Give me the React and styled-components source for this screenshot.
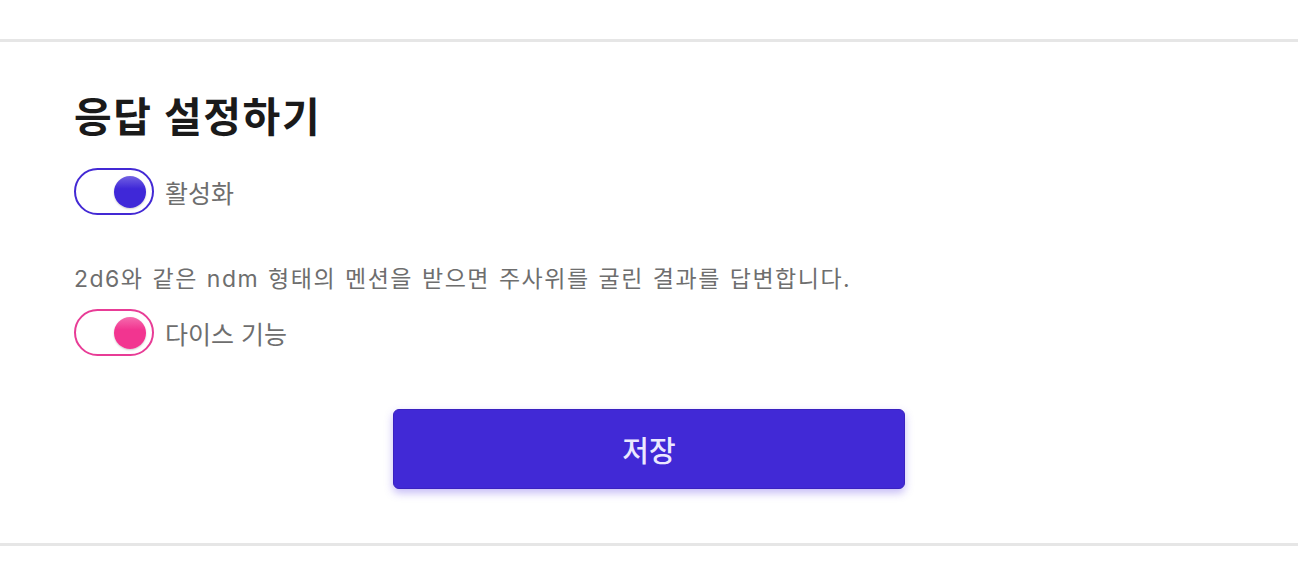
import styled, { createGlobalStyle } from "styled-components";

const Global = createGlobalStyle`
  body {
    margin: 0;
    background: #fff;
    font-family: Inter, "Noto Sans CJK KR", sans-serif;
  }
`;

export default function App() {
  return (<>
    <Global />
    <Page>
      <Card>
        <Title>응답 설정하기</Title>
        <Row $top={27}>
          <Toggle color="#4329d4" knob="#3f28d8" />
          <Label>활성화</Label>
        </Row>
        <Desc>2d6와 같은 ndm 형태의 멘션을 받으면 주사위를 굴린 결과를 답변합니다.</Desc>
        <Row $top={15}>
          <Toggle color="#e83c96" knob="#f23590" />
          <Label>다이스 기능</Label>
        </Row>
        <Actions>
          <SaveButton>저장</SaveButton>
        </Actions>
      </Card>
    </Page>
  </>);
}

function Toggle({ color, knob }) {
  return (
    <Track $color={color}>
      <Knob $color={knob} />
    </Track>
  );
}

const Page = styled.div`
  padding-top: 39px;
`;

const Card = styled.div`
  border-top: 3px solid #e6e6e6;
  border-bottom: 3px solid #e6e6e6;
  padding: 51px 74px 54px;
  display: flex;
  flex-direction: column;
`;

const Title = styled.h1`
  margin: 0;
  font-size: 41px;
  font-weight: 700;
  letter-spacing: 1.6px;
  color: #1a1a1a;
  line-height: 48px;
`;

const Row = styled.div`
  display: flex;
  align-items: center;
  gap: 11px;
  margin-top: ${p => p.$top}px;
`;

const Track = styled.div`
  box-sizing: border-box;
  width: 80px;
  height: 47px;
  border: 2px solid ${p => p.$color};
  border-radius: 24px;
  display: flex;
  align-items: center;
  justify-content: flex-end;
  padding-right: 6px;
  background: #fff;
`;

const Knob = styled.div`
  width: 32px;
  height: 32px;
  border-radius: 50%;
  background: linear-gradient(180deg, ${p => p.$color}bb 0%, ${p => p.$color} 40%);
  box-shadow: 0 1px 2px rgba(0, 0, 0, 0.2);
`;

const Label = styled.span`
  font-size: 25px;
  color: #6e6e6e;
`;

const Desc = styled.p`
  margin: 49px 0 0;
  font-size: 23px;
  line-height: 30px;
  letter-spacing: 1.5px;
  word-spacing: 1px;
  color: #6e6e6e;
`;

const Actions = styled.div`
  display: flex;
  justify-content: center;
  margin-top: 53px;
`;

const SaveButton = styled.button`
  width: 512px;
  height: 80px;
  background: #4129d6;
  border: 1px solid #3a22c0;
  border-radius: 6px;
  color: #ebe8ff;
  font-family: inherit;
  font-size: 29px;
  font-weight: 500;
  box-shadow: 0 4px 8px rgba(90, 60, 230, 0.35);
  cursor: pointer;
`;
